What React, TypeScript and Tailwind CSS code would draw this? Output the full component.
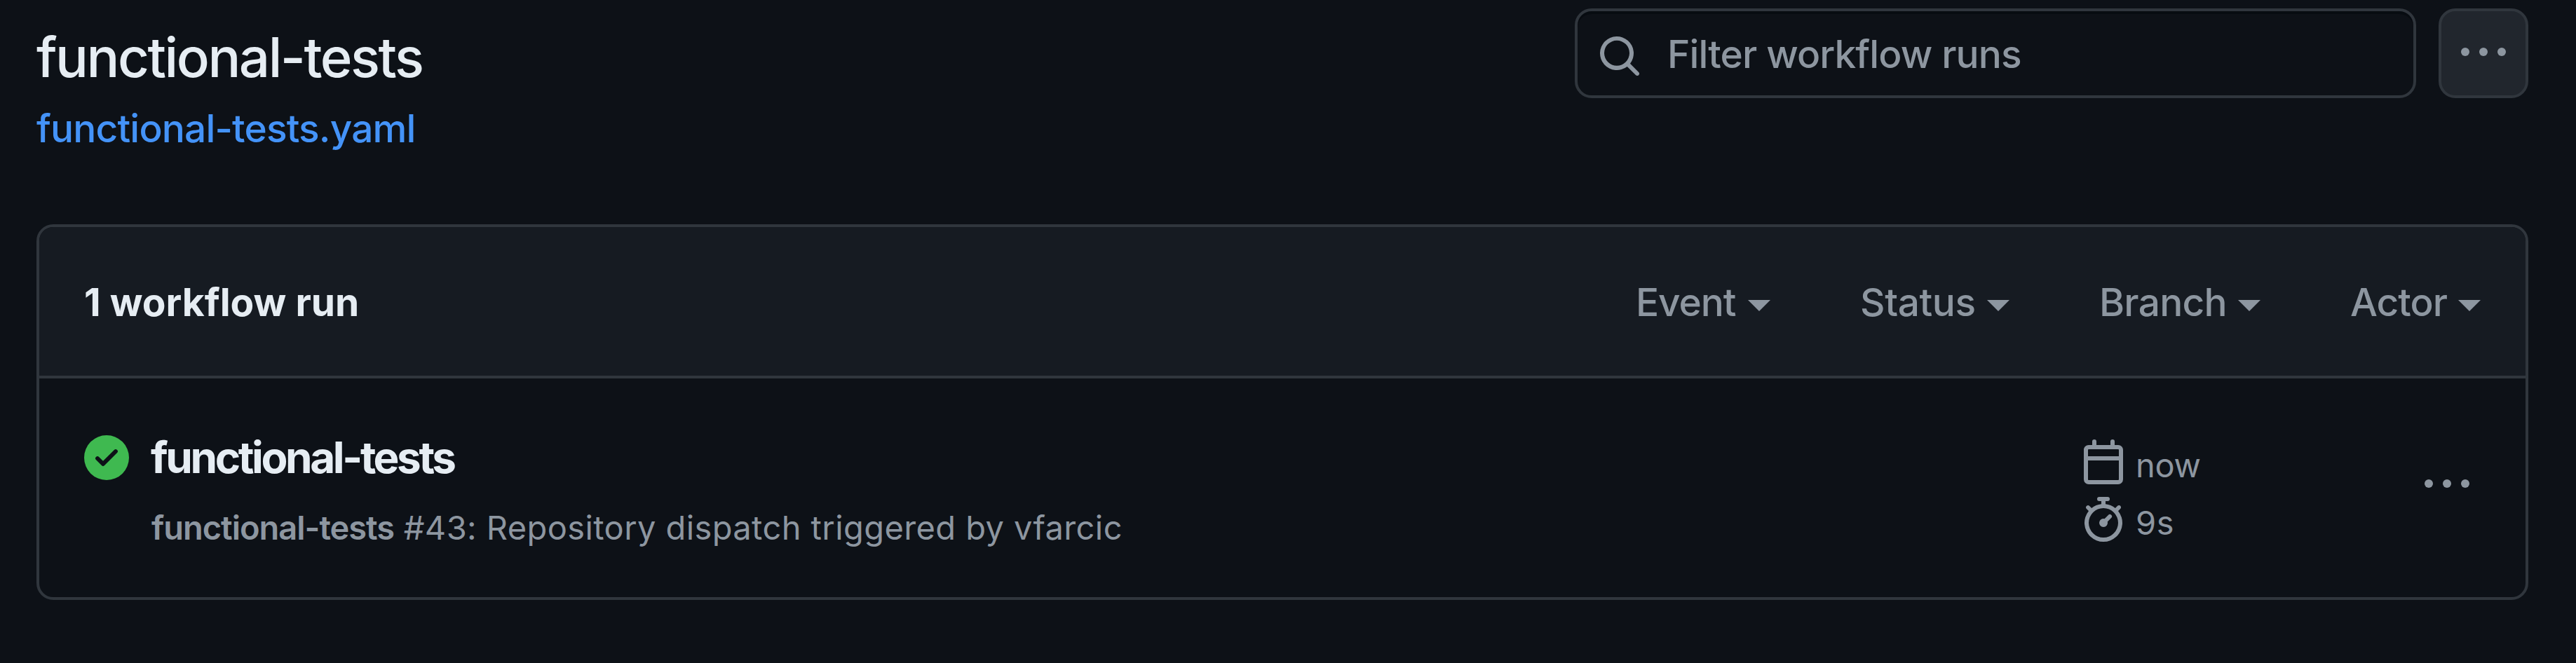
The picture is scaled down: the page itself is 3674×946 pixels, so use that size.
function Dots() {
  return (
    <svg viewBox="0 0 16 16" fill="currentColor" className="size-16 shrink-0">
      <circle cx="1.5" cy="7.5" r="1.5" />
      <circle cx="8" cy="7.5" r="1.5" />
      <circle cx="14.5" cy="7.5" r="1.5" />
    </svg>
  );
}

function Icon({ d, className = "" }: { d: string; className?: string }) {
  return (
    <svg viewBox="0 0 16 16" fill="currentColor" className={`size-16 shrink-0 ${className}`}>
      <path d={d} />
    </svg>
  );
}

const paths = {
  search:
    "M10.68 11.74a6 6 0 0 1-7.922-8.982 6 6 0 0 1 8.982 7.922l3.04 3.04a.749.749 0 0 1-.326 1.275.749.749 0 0 1-.734-.215ZM11.5 7a4.499 4.499 0 1 0-8.997 0A4.499 4.499 0 0 0 11.5 7Z",
  check:
    "M8 16A8 8 0 1 1 8 0a8 8 0 0 1 0 16Zm3.78-9.72a.751.751 0 0 0-.018-1.042.751.751 0 0 0-1.042-.018L6.75 9.19 5.28 7.72a.751.751 0 0 0-1.042.018.751.751 0 0 0-.018 1.042l2 2a.75.75 0 0 0 1.06 0Z",
  calendar:
    "M4.75 0a.75.75 0 0 1 .75.75V2h5V.75a.75.75 0 0 1 1.5 0V2h1.25c.966 0 1.75.784 1.75 1.75v10.5A1.75 1.75 0 0 1 13.25 16H2.75A1.75 1.75 0 0 1 1 14.25V3.75C1 2.784 1.784 2 2.75 2H4V.75A.75.75 0 0 1 4.75 0ZM2.5 7.5v6.75c0 .138.112.25.25.25h10.5a.25.25 0 0 0 .25-.25V7.5Zm10.75-4H2.75a.25.25 0 0 0-.25.25V6h11V3.75a.25.25 0 0 0-.25-.25Z",
  stopwatch:
    "M5.75.75A.75.75 0 0 1 6.5 0h3a.75.75 0 0 1 0 1.5h-.75v1l-.001.041a6.724 6.724 0 0 1 3.464 1.435l.007-.006.75-.75a.749.749 0 0 1 1.275.326.749.749 0 0 1-.215.734l-.75.75-.006.007a6.75 6.75 0 1 1-10.548 0L2.72 5.03l-.75-.75a.751.751 0 0 1 .018-1.042.751.751 0 0 1 1.042-.018l.75.75.007.006A6.72 6.72 0 0 1 7.25 2.541V1.5H6.5a.75.75 0 0 1-.75-.75ZM8 14.5a5.25 5.25 0 1 0-.001-10.501A5.25 5.25 0 0 0 8 14.5Zm.389-6.7 1.33-1.33a.75.75 0 1 1 1.061 1.06L9.45 8.861A1.503 1.503 0 0 1 8 10.75a1.499 1.499 0 1 1 .389-2.95Z",
};

const filters = [
  { label: "Event", className: "w-[144px] tracking-[-1.1px]" },
  { label: "Status", className: "w-[165px] tracking-[-0.4px]" },
  { label: "Branch", className: "w-[182px] tracking-[-0.75px]" },
  { label: "Actor", className: "w-[138px] tracking-[-1px]" },
];

export default function App() {
  return (
    <div className="h-[946px] w-[3674px] overflow-hidden whitespace-nowrap bg-[#0d1117] pl-[52px] pt-3 font-['Inter',sans-serif] font-medium text-[#8d96a0]">
      <header className="flex h-[308px] w-[3554px] justify-between">
        <div className="pt-[22px]">
          <h1 className="text-[78px] font-medium leading-[96px] tracking-[-2.48px] text-[#e6edf3]">functional-tests</h1>
          <a className="mt-[11px] block text-[55px] leading-[84px] tracking-[-0.83px] text-[#4493f8]">
            functional-tests.yaml
          </a>
        </div>
        <div className="flex h-32 gap-8">
          <div className="flex w-[1200px] items-center rounded-3xl border-4 border-[#30363d] pl-7 shadow-[inset_0_4px_0_rgba(1,4,9,0.4)]">
            <Icon d={paths.search} className="mt-2" />
            <span className="pl-9 pt-0.5 text-[55px] tracking-[-0.89px]">Filter workflow runs</span>
          </div>
          <button className="flex w-32 items-center justify-center rounded-3xl border-4 border-[#30363d] bg-[#21262d]">
            <Dots />
          </button>
        </div>
      </header>

      <section className="h-[536px] w-[3554px] overflow-hidden rounded-3xl border-4 border-[#30363d]">
        <div className="flex h-[216px] items-center justify-between border-b-4 border-[#30363d] bg-[#161b22] px-16 pt-0.5 text-[55px]">
          <h2 className="font-bold tracking-[0.02px] text-[#e6edf3]">1 workflow run</h2>
          <div className="flex gap-32">
            {filters.map((f) => (
              <div key={f.label} className="flex items-center gap-4">
                <span className={f.className}>{f.label}</span>
                <svg viewBox="0 0 32 16" fill="currentColor" className="mt-2.5 h-4 w-8">
                  <path d="M0 0h32L16 16Z" />
                </svg>
              </div>
            ))}
          </div>
        </div>

        <div className="flex items-start pl-16 pr-20 pt-[73px]">
          <Icon d={paths.check} className="mt-2 text-[#3fb950]" />
          <div className="grow pl-8">
            <div className="-ml-px text-[62px] font-bold leading-[80px] tracking-[-3.4px] text-[#e6edf3]">
              functional-tests
            </div>
            <div className="mt-6 text-[47px] font-normal leading-[72px] tracking-[0.41px]">
              <span className="font-semibold tracking-[-1.02px]">functional-tests</span> #43: Repository dispatch
              triggered by vfarcic
            </div>
          </div>
          <div className="flex w-[490px] flex-col gap-[18px] pt-3.5 text-[47px] font-normal leading-[60px]">
            <div className="flex h-16 gap-[14px]">
              <Icon d={paths.calendar} />
              <span className="pt-[7px] tracking-[-0.3px]">now</span>
            </div>
            <div className="flex h-16 gap-[14px]">
              <Icon d={paths.stopwatch} />
              <span className="pt-[7px] tracking-[0.7px]">9s</span>
            </div>
          </div>
          <div className="pt-[47px]">
            <Dots />
          </div>
        </div>
      </section>
    </div>
  );
}
